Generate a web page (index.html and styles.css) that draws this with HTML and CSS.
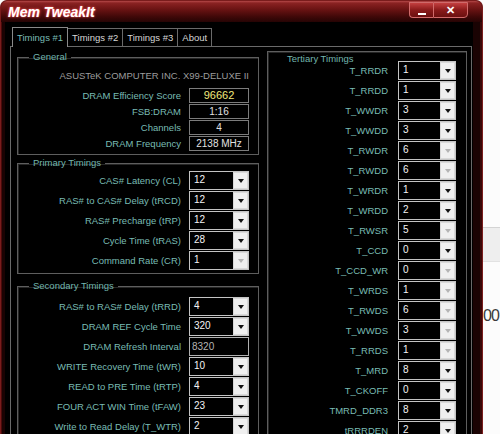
FILE: index.html
```html
<!DOCTYPE html>
<html lang="en">
<head>
    <meta charset="UTF-8">
    <title>Mem TweakIt</title>
    <link rel="stylesheet" href="styles.css">
</head>
<body>
    <div class="screen">
        <div class="window">
            <div class="titlebar">
                <span class="title">Mem TweakIt</span>
                <div class="caption-btns">
                    <span class="cap-btn min"></span>
                    <span class="cap-btn close">✕</span>
                </div>
            </div>

            <div class="client">
                <div class="tabs">
                    <span class="tab active">Timings #1</span>
                    <span class="tab">Timings #2</span>
                    <span class="tab">Timings #3</span>
                    <span class="tab">About</span>
                </div>

                <div class="panel">
                    <div class="col-left">
                        <fieldset class="group general">
                            <legend>General</legend>
                            <div class="board">ASUSTeK COMPUTER INC. X99-DELUXE II</div>
                            <div class="info-row"><span class="label">DRAM Efficiency Score</span><span class="info-box score">96662</span></div>
                            <div class="info-row"><span class="label">FSB:DRAM</span><span class="info-box">1:16</span></div>
                            <div class="info-row"><span class="label">Channels</span><span class="info-box">4</span></div>
                            <div class="info-row"><span class="label">DRAM Frequency</span><span class="info-box">2138 MHz</span></div>
                        </fieldset>

                        <fieldset class="group primary">
                            <legend>Primary Timings</legend>
                            <div class="row"><span class="label">CAS# Latency (CL)</span><div class="combo"><span class="val">12</span><span class="drop"></span></div></div>
                            <div class="row"><span class="label">RAS# to CAS# Delay (tRCD)</span><div class="combo"><span class="val">12</span><span class="drop"></span></div></div>
                            <div class="row"><span class="label">RAS# Precharge (tRP)</span><div class="combo"><span class="val">12</span><span class="drop"></span></div></div>
                            <div class="row"><span class="label">Cycle Time (tRAS)</span><div class="combo"><span class="val">28</span><span class="drop"></span></div></div>
                            <div class="row"><span class="label">Command Rate (CR)</span><div class="combo off"><span class="val">1</span><span class="drop"></span></div></div>
                        </fieldset>

                        <fieldset class="group secondary">
                            <legend>Secondary Timings</legend>
                            <div class="row"><span class="label">RAS# to RAS# Delay (tRRD)</span><div class="combo"><span class="val">4</span><span class="drop"></span></div></div>
                            <div class="row"><span class="label">DRAM REF Cycle Time</span><div class="combo"><span class="val">320</span><span class="drop"></span></div></div>
                            <div class="row"><span class="label">DRAM Refresh Interval</span><div class="textbox">8320</div></div>
                            <div class="row"><span class="label">WRITE Recovery Time (tWR)</span><div class="combo"><span class="val">10</span><span class="drop"></span></div></div>
                            <div class="row"><span class="label">READ to PRE Time (tRTP)</span><div class="combo"><span class="val">4</span><span class="drop"></span></div></div>
                            <div class="row"><span class="label">FOUR ACT WIN Time (tFAW)</span><div class="combo"><span class="val">23</span><span class="drop"></span></div></div>
                            <div class="row"><span class="label">Write to Read Delay (T_WTR)</span><div class="combo"><span class="val">2</span><span class="drop"></span></div></div>
                        </fieldset>
                    </div>

                    <div class="col-right">
                        <div class="group tertiary">
                            <div class="group-title">Tertiary Timings</div>
                            <div class="rows">
                                <div class="row"><span class="label">T_RRDR</span><div class="combo"><span class="val">1</span><span class="drop"></span></div></div>
                                <div class="row"><span class="label">T_RRDD</span><div class="combo"><span class="val">1</span><span class="drop"></span></div></div>
                                <div class="row"><span class="label">T_WWDR</span><div class="combo"><span class="val">3</span><span class="drop"></span></div></div>
                                <div class="row"><span class="label">T_WWDD</span><div class="combo"><span class="val">3</span><span class="drop"></span></div></div>
                                <div class="row"><span class="label">T_RWDR</span><div class="combo off"><span class="val">6</span><span class="drop"></span></div></div>
                                <div class="row"><span class="label">T_RWDD</span><div class="combo off"><span class="val">6</span><span class="drop"></span></div></div>
                                <div class="row"><span class="label">T_WRDR</span><div class="combo"><span class="val">1</span><span class="drop"></span></div></div>
                                <div class="row"><span class="label">T_WRDD</span><div class="combo"><span class="val">2</span><span class="drop"></span></div></div>
                                <div class="row"><span class="label">T_RWSR</span><div class="combo off"><span class="val">5</span><span class="drop"></span></div></div>
                                <div class="row"><span class="label">T_CCD</span><div class="combo"><span class="val">0</span><span class="drop"></span></div></div>
                                <div class="row"><span class="label">T_CCD_WR</span><div class="combo off"><span class="val">0</span><span class="drop"></span></div></div>
                                <div class="row"><span class="label">T_WRDS</span><div class="combo off"><span class="val">1</span><span class="drop"></span></div></div>
                                <div class="row"><span class="label">T_RWDS</span><div class="combo off"><span class="val">6</span><span class="drop"></span></div></div>
                                <div class="row"><span class="label">T_WWDS</span><div class="combo off"><span class="val">3</span><span class="drop"></span></div></div>
                                <div class="row"><span class="label">T_RRDS</span><div class="combo off"><span class="val">1</span><span class="drop"></span></div></div>
                                <div class="row"><span class="label">T_MRD</span><div class="combo"><span class="val">8</span><span class="drop"></span></div></div>
                                <div class="row"><span class="label">T_CKOFF</span><div class="combo"><span class="val">0</span><span class="drop"></span></div></div>
                                <div class="row"><span class="label">TMRD_DDR3</span><div class="combo"><span class="val">8</span><span class="drop"></span></div></div>
                                <div class="row"><span class="label">tRRRDEN</span><div class="combo"><span class="val">2</span><span class="drop"></span></div></div>
                            </div>
                        </div>
                    </div>
                </div>
            </div>
        </div>

        <div class="desktop">
            <div class="desk-band"></div>
            <div class="desk-text">00</div>
        </div>
    </div>
</body>
</html>
```

FILE: styles.css
```css
* {
    box-sizing: border-box;
    margin: 0;
    padding: 0;
}

body {
    width: 500px;
    height: 434px;
    overflow: hidden;
    background-color: #fbfbfb;
    font-family: 'Liberation Sans', Arial, sans-serif;
    font-size: 9.5px;
}

.screen {
    display: flex;
    width: 500px;
    height: 434px;
    overflow: hidden;
}

/* window frame */
.window {
    flex: 0 0 483px;
    height: 460px;
    background-color: #1a0303;
    border: 1px solid #7a1c1c;
    border-bottom: none;
    border-radius: 7px 7px 0 0;
    box-shadow: inset 1px 0 0 #4a0a0a, inset -2px 0 0 #3a0707;
    overflow: hidden;
}

.titlebar {
    display: flex;
    align-items: flex-start;
    height: 21px;
    padding-left: 7px;
    background: linear-gradient(#b44848 0, #8a2222 2px, #6c1414 8px, #3e0808 16px, #260404 21px);
}

.title {
    margin-top: 3px;
    color: #fff;
    font-size: 14px;
    font-weight: bold;
    font-style: italic;
    line-height: 16px;
    text-shadow: 0 0 3px #ff5050, 0 0 1px #ff8080;
}

.caption-btns {
    display: flex;
    margin-left: auto;
    margin-right: 14px;
    margin-top: 1px;
}

    .caption-btns .cap-btn {
        height: 16px;
        border: 1px solid #d06a6a;
        background: linear-gradient(#c44040, #8a1a1a 50%, #6a1010);
        color: #fff;
        display: flex;
        align-items: center;
        justify-content: center;
    }

    .caption-btns .min {
        width: 24px;
        border-radius: 0 0 0 4px;
        border-right: none;
    }

        .caption-btns .min::after {
            content: '';
            width: 8px;
            height: 2px;
            margin-top: 7px;
            background-color: #fff;
        }

    .caption-btns .close {
        width: 35px;
        border-radius: 0 0 4px 0;
        font-size: 11px;
        font-weight: bold;
    }

/* client area */
.client {
    width: 468px;
    margin-left: 4px;
    height: 440px;
    background-color: #000;
    padding: 5px 1px 0 5px;
}

.tabs {
    display: flex;
    align-items: flex-end;
    height: 19px;
    padding-left: 2px;
}

.tab {
    height: 18px;
    padding: 0 4px;
    border: 1px solid #6a6a6a;
    border-bottom: none;
    margin-left: -1px;
    color: #d6d6d6;
    line-height: 17px;
    white-space: nowrap;
}

    .tab.active {
        position: relative;
        z-index: 1;
        height: 20px;
        margin-bottom: -1px;
        margin-left: 0;
        background-color: #000;
        border-color: #8a8a8a;
        color: #79bcb4;
        line-height: 19px;
    }

.panel {
    display: flex;
    gap: 8px;
    width: 462px;
    height: 400px;
    border: 1px solid #6a6a6a;
    padding: 4px 4px 0 6px;
}

.col-left {
    width: 242px;
    display: flex;
    flex-direction: column;
}

.col-right {
    width: 200px;
}

/* group boxes */
.group {
    border: 1px solid #5e5e5e;
    box-shadow: 1px 1px 0 #262626 inset;
    min-width: 0;
}

fieldset.group {
    padding: 0 9px 3px 6px;
}

    fieldset.group legend {
        margin-left: 5px;
        padding: 0 4px;
        line-height: 12px;
        color: #72b6ae;
    }

.label {
    color: #79bcb4;
    text-align: right;
    white-space: nowrap;
}

.general {
    padding-bottom: 6px;
}

.board {
    margin-top: 7px;
    margin-bottom: 5px;
    line-height: 12px;
    color: #9c9c9c;
    text-align: right;
    white-space: nowrap;
}

.info-row {
    display: grid;
    grid-template-columns: 1fr 60px;
    column-gap: 8px;
    align-items: center;
    height: 16px;
}

.info-box {
    height: 15px;
    border: 1px solid #7c7c7c;
    background-color: #000;
    color: #e2e2e2;
    font-size: 10px;
    line-height: 13px;
    text-align: center;
}

    .info-box.score {
        color: #f2ea7c;
        font-size: 11px;
    }

.primary {
    margin-top: 2px;
}

    .primary .row:first-of-type {
        margin-top: 1px;
    }

.secondary {
    margin-top: 6px;
}

    .secondary .row:first-of-type {
        margin-top: 4px;
    }

.row {
    display: grid;
    grid-template-columns: 1fr 60px;
    column-gap: 8px;
    align-items: center;
    height: 20px;
}

/* combo boxes */
.combo {
    display: flex;
    height: 19px;
    border: 1px solid #c4c4c4;
    background-color: #000;
}

    .combo .val {
        flex: 1;
        padding-left: 4px;
        color: #f4f4f4;
        font-size: 10px;
        line-height: 16px;
    }

    .combo .drop {
        width: 15px;
        background-color: #efefef;
        border: 1px solid #d8d8d8;
        display: flex;
        align-items: center;
        justify-content: center;
    }

        .combo .drop::after {
            content: '';
            margin-top: 2px;
            border-top: 4px solid #111;
            border-left: 3.5px solid transparent;
            border-right: 3.5px solid transparent;
        }

    .combo.off .drop::after {
        border-top-color: #b4b4b4;
    }

.textbox {
    height: 19px;
    border: 1px solid #b0b0b0;
    background-color: #000;
    padding-left: 2px;
    color: #b4b4b4;
    font-size: 10px;
    line-height: 17px;
}

/* tertiary */
.tertiary {
    height: 400px;
    padding: 0 10px 0 0;
}

.group-title {
    margin-top: 1px;
    padding-left: 19px;
    line-height: 12px;
    color: #72b6ae;
}

.tertiary .rows {
    margin-top: -5px;
}

.tertiary .row {
    grid-template-columns: 1fr 58px;
    column-gap: 10px;
}

/* desktop behind the window */
.desktop {
    flex: 1;
    overflow: hidden;
    background-color: #fcfcfc;
}

.desk-band {
    margin-top: 227px;
    height: 35px;
    border-top: 1px solid #d4d4d4;
    border-bottom: 1px solid #e2e2e2;
    background-color: #eeeeee;
}

.desk-text {
    margin-top: 46px;
    color: #3a3a3a;
    font-size: 16px;
    line-height: 16px;
    letter-spacing: -1px;
    white-space: nowrap;
}
```
